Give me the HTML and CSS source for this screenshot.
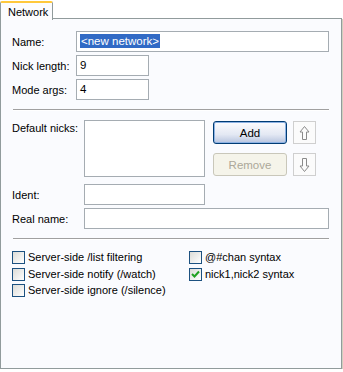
FILE: index.html
```html
<!DOCTYPE html>
<html lang="en">
<head>
  <meta charset="UTF-8">
  <title>Network</title>
  <link rel="stylesheet" href="styles.css">
</head>
<body>
  <div class="tabs">
    <div class="tab">Network</div>
  </div>

  <div class="panel">
    <div class="form-top">
      <label>Name:</label>
      <div class="field wide"><span class="selected">&lt;new network&gt;</span></div>
      <label>Nick length:</label>
      <div class="field short">9</div>
      <label>Mode args:</label>
      <div class="field short">4</div>
    </div>

    <div class="sep"></div>

    <div class="nicks">
      <label class="top">Default nicks:</label>
      <div class="listbox"></div>
      <div class="nick-buttons">
        <button class="btn default">Add</button>
        <button class="arrow">
          <svg width="11" height="16" viewBox="0 0 11 16"><path d="M5.5 1.5 L10 7 L7.5 7 L7.5 14.5 L3.5 14.5 L3.5 7 L1 7 Z" fill="none" stroke="#8a8a8a" stroke-width="1"/></svg>
        </button>
        <button class="btn" disabled>Remove</button>
        <button class="arrow">
          <svg width="11" height="16" viewBox="0 0 11 16"><path d="M5.5 14.5 L10 9 L7.5 9 L7.5 1.5 L3.5 1.5 L3.5 9 L1 9 Z" fill="none" stroke="#8a8a8a" stroke-width="1"/></svg>
        </button>
      </div>
    </div>

    <div class="form-bottom">
      <label>Ident:</label>
      <div class="field mid"></div>
      <label>Real name:</label>
      <div class="field wide"></div>
    </div>

    <div class="sep"></div>

    <div class="options">
      <div class="check"><span class="box"></span>Server-side /list filtering</div>
      <div class="check"><span class="box"></span>@#chan syntax</div>
      <div class="check"><span class="box"></span>Server-side notify (/watch)</div>
      <div class="check"><span class="box checked"><svg width="11" height="11" viewBox="0 0 11 11"><path d="M2 5 L4.5 7.5 L9 2.5" fill="none" stroke="#21a121" stroke-width="2"/></svg></span>nick1,nick2 syntax</div>
      <div class="check"><span class="box"></span>Server-side ignore (/silence)</div>
    </div>
  </div>
</body>
</html>
```

FILE: styles.css
```css
body {
  margin: 0;
  background: #ffffff;
  font-family: "Liberation Sans", Arial, sans-serif;
  font-size: 11px;
  color: #000;
}
.tabs {
  display: flex;
  height: 19px;
  padding-top: 1px;
  box-sizing: border-box;
}
.tab {
  position: relative;
  z-index: 1;
  width: 53px;
  height: 19px;
  box-sizing: border-box;
  padding: 3px 0 0 7px;
  background: #fcfcfe;
  border: 1px solid #919b9c;
  border-top: 2px solid #ffc83c;
  border-bottom: none;
  border-radius: 2px 2px 0 0;
}
.panel {
  width: 342px;
  height: 351px;
  box-sizing: border-box;
  margin-top: -1px;
  padding: 12px 12px 0 11px;
  background: #fafbfe;
  border: 1px solid #919b9c;
  box-shadow: 1px 1px 0 #d0d0bf;
}
label {
  display: block;
}
.form-top,
.form-bottom {
  display: grid;
  grid-template-columns: 64px 1fr;
  row-gap: 3px;
  align-items: center;
}
.form-bottom {
  grid-template-columns: 72px 1fr;
  margin-top: 7px;
}
.field {
  height: 21px;
  box-sizing: border-box;
  padding: 3px 0 0 3px;
  background: #fff;
  border: 1px solid #a5acb2;
  font-size: 11.5px;
}
.field.short {
  width: 73px;
}
.field.mid {
  width: 121px;
}
.selected {
  background: #316ac5;
  color: #fff;
  padding: 1px 1px;
}
.sep {
  margin: 9px 0 0 1px;
  border-top: 1px solid #a0a0a0;
  border-bottom: 1px solid #fff;
}
.nicks {
  display: flex;
  margin-top: 9px;
}
.nicks .top {
  width: 72px;
  padding-top: 2px;
}
.listbox {
  width: 121px;
  height: 57px;
  box-sizing: border-box;
  background: #fff;
  border: 1px solid #a5acb2;
}
.nick-buttons {
  display: grid;
  grid-template-columns: 74px 23px;
  column-gap: 6px;
  row-gap: 9px;
  margin: 1px 0 0 8px;
  align-content: start;
}
.btn {
  height: 23px;
  font-family: inherit;
  font-size: 11.5px;
  color: #000;
  background: linear-gradient(#ffffff, #f0f0ea 70%, #d6d0c5);
  border: 1px solid #003c74;
  border-radius: 3px;
  padding: 0;
}
.btn.default {
  background: linear-gradient(#fdfdfe, #e3e8f3 60%, #b7c4de);
  box-shadow: inset 0 0 0 1px #8db2e3;
}
.btn:disabled {
  color: #aca899;
  background: #f5f4ea;
  border-color: #c9c7ba;
  box-shadow: none;
}
.arrow {
  width: 23px;
  height: 23px;
  padding: 0;
  display: flex;
  align-items: center;
  justify-content: center;
  background: #fbfbfb;
  border: 1px solid #cfcfcf;
}
.options {
  display: grid;
  grid-template-columns: 177px 1fr;
  grid-auto-rows: 16.5px;
  margin-top: 11px;
}
.check {
  display: flex;
  align-items: flex-start;
  line-height: 13px;
  white-space: nowrap;
}
.box {
  display: flex;
  align-items: center;
  justify-content: center;
  width: 13px;
  height: 13px;
  box-sizing: border-box;
  margin-right: 3px;
  border: 1px solid #1c5180;
  background: linear-gradient(135deg, #dcdcd7, #ffffff);
}
```
